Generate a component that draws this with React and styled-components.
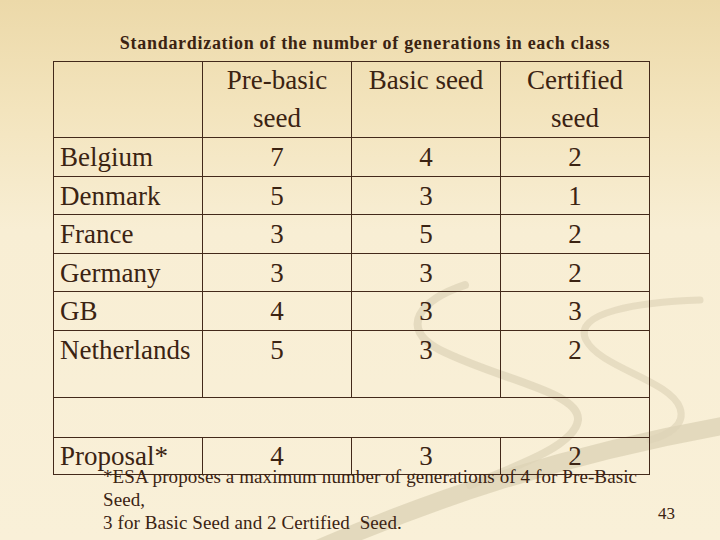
import React from "react";
import styled, { createGlobalStyle } from "styled-components";

const serif = `"Liberation Serif", "DejaVu Serif", "Times New Roman", Times, serif`;

const GlobalStyle = createGlobalStyle`
  html, body {
    margin: 0;
    padding: 0;
  }
  body {
    font-family: ${serif};
    color: #3b2312;
  }
`;

const Slide = styled.div`
  position: relative;
  width: 720px;
  height: 540px;
  overflow: hidden;
  font-family: ${serif};
  color: #3b2312;
  background: linear-gradient(180deg, #ecd9a9 0px, #f3e4bd 110px, #f8eed4 230px, #f9f0d8 540px);
`;

const Swoosh = styled.svg`
  position: absolute;
  left: 0;
  top: 0;
  width: 720px;
  height: 540px;
  pointer-events: none;
`;

const Content = styled.div`
  position: relative;
  padding: 33px 0 0 53px;
  display: flex;
  flex-direction: column;
`;

const Title = styled.h1`
  margin: 0 0 8px 0;
  width: 596px;
  padding-left: 28px;
  box-sizing: border-box;
  text-align: center;
  white-space: nowrap;
  font-family: ${serif};
  font-size: 18px;
  letter-spacing: 0.7px;
  line-height: 20px;
  font-weight: 700;
`;

const Grid = styled.table`
  border-collapse: collapse;
  width: 596px;
  table-layout: fixed;
  font-family: ${serif};
  color: #3b2312;
  font-size: 27px;
`;

const Row = styled.tr`
  height: ${(p) => p.$h}px;
`;

const Cell = styled.td`
  border: 1.5px solid #43291a;
  padding: ${(p) => p.$pt || 0}px 0 0 ${(p) => (p.$left ? "6px" : "0")};
  line-height: ${(p) => p.$lh || 34}px;
  text-align: ${(p) => (p.$left ? "left" : "center")};
  vertical-align: ${(p) => p.$valign || "middle"};
  white-space: nowrap;
`;

const Bottom = styled.div`
  display: flex;
  align-items: flex-end;
  justify-content: space-between;
  margin-top: -10px;
  width: 622px;
`;

const Footnote = styled.div`
  padding-left: 50px;
  font-size: 19px;
  letter-spacing: 0.1px;
  line-height: 23px;
`;

const FootLine = styled.div`
  white-space: nowrap;
`;

const PageNo = styled.div`
  font-size: 17px;
  line-height: 20px;
  margin-bottom: 10px;
`;

const rows = [
  ["Belgium", 7, 4, 2, 39],
  ["Denmark", 5, 3, 1, 38],
  ["France", 3, 5, 2, 39],
  ["Germany", 3, 3, 2, 38],
  ["GB", 4, 3, 3, 39],
];

export default function App() {
  return (
    <>
      <GlobalStyle />
      <Slide>
        <Swoosh viewBox="0 0 720 540">
          <g fill="none" stroke="#ddd3b7" strokeLinecap="round">
            <path d="M320 548 C 430 500, 560 455, 728 425" strokeWidth="18" opacity="0.8" />
            <path d="M465 285 C 420 300, 398 328, 440 350 C 500 380, 580 392, 578 420 C 575 445, 520 465, 470 485" strokeWidth="8" opacity="0.7" />
            <path d="M700 300 C 640 302, 572 312, 586 340 C 600 368, 670 380, 680 408 C 686 425, 668 435, 650 440" strokeWidth="7" opacity="0.65" />
          </g>
        </Swoosh>
        <Content>
          <Title>Standardization of the number of generations in each class</Title>
          <Grid>
            <colgroup>
              <col style={{ width: 149 }} />
              <col style={{ width: 149 }} />
              <col style={{ width: 149 }} />
              <col style={{ width: 149 }} />
            </colgroup>
            <tbody>
              <Row $h={75}>
                <Cell $left />
                <Cell $lh={37.5}>Pre-basic<br />seed</Cell>
                <Cell $lh={37.5} $valign="top">Basic seed</Cell>
                <Cell $lh={37.5}>Certified<br />seed</Cell>
              </Row>
              {rows.map(([name, a, b, c, h]) => (
                <Row key={name} $h={h}>
                  <Cell $left>{name}</Cell>
                  <Cell>{a}</Cell>
                  <Cell>{b}</Cell>
                  <Cell>{c}</Cell>
                </Row>
              ))}
              <Row $h={67}>
                <Cell $left $valign="top" $pt={2}>Netherlands</Cell>
                <Cell $valign="top" $pt={2}>5</Cell>
                <Cell $valign="top" $pt={2}>3</Cell>
                <Cell $valign="top" $pt={2}>2</Cell>
              </Row>
              <Row $h={40}>
                <Cell colSpan={4} />
              </Row>
              <Row $h={37}>
                <Cell $left>Proposal*</Cell>
                <Cell>4</Cell>
                <Cell>3</Cell>
                <Cell>2</Cell>
              </Row>
            </tbody>
          </Grid>
          <Bottom>
            <Footnote>
              <FootLine>*ESA proposes a maximum number of generations of 4 for Pre-Basic</FootLine>
              <FootLine>Seed,</FootLine>
              <FootLine>3 for Basic Seed and 2 Certified&nbsp; Seed.</FootLine>
            </Footnote>
            <PageNo>43</PageNo>
          </Bottom>
        </Content>
      </Slide>
    </>
  );
}
